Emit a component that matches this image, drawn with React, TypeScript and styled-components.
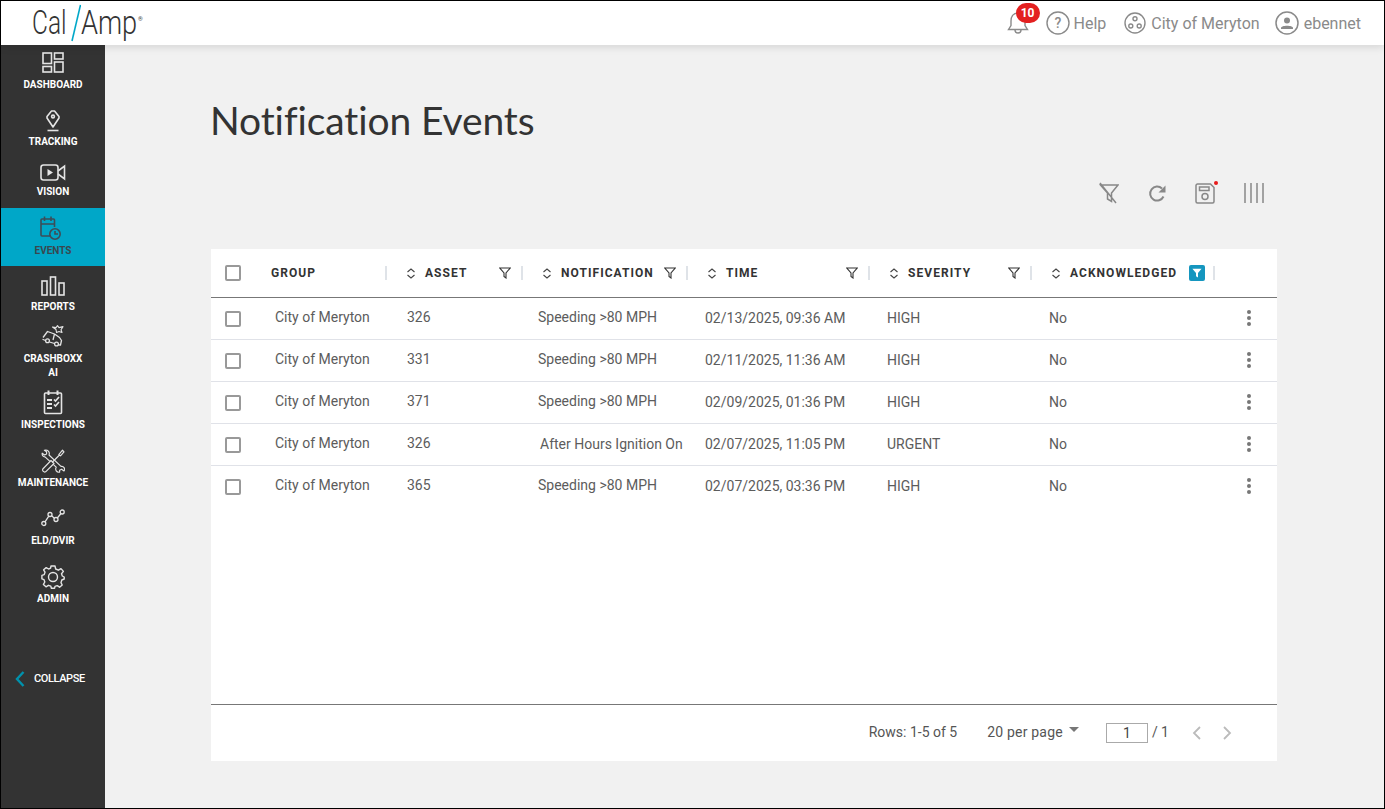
import React from "react";
import styled, { createGlobalStyle } from "styled-components";

const Global = createGlobalStyle`
  html, body { margin: 0; padding: 0; background: #f1f1f1; }
  * { box-sizing: border-box; }
`;

const COLS = "46px 130px 136px 165px 182px 162px 183px 62px";

const Frame = styled.div`
  width: 1385px; height: 809px; border: 1px solid #000; display: flex; flex-direction: column;
  overflow: hidden; background: #f1f1f1; font-family: Roboto, "Liberation Sans", sans-serif;
`;
const Header = styled.header`
  height: 44px; flex: none; background: #fff; display: flex; align-items: center; justify-content: space-between;
  box-shadow: 0 2px 8px rgba(0,0,0,.12); position: relative; z-index: 2; padding: 0 23px 0 31px;
`;
const Logo = styled.div`
  display: flex; align-items: center; height: 44px; color: #333;
`;
const LogoWord = styled.span<{ $w: number; $sx: number }>`
  display: inline-block; width: ${p => p.$w}px; font: 300 34px/42px Roboto, sans-serif; margin-top: -2px; transform: scaleX(${p => p.$sx}); transform-origin: left center; white-space: nowrap;
`;
const LogoReg = styled.span`
  font: 400 6px/8px Roboto, sans-serif; color: #444; margin: -9px 0 0 1px;
`;
const HeaderRight = styled.div`display: flex; align-items: center;`;
const HeaderLink = styled.div<{ $ml: number; $gap: number }>`
  display: flex; align-items: center; gap: ${p => p.$gap}px; margin-left: ${p => p.$ml}px; color: #8a8a8a; font-size: 16px; white-space: nowrap;
`;
const BellWrap = styled.div`position: relative; width: 24px; height: 24px; display: flex; `;
const Badge = styled.span`
  position: absolute; left: 9px; top: -8px; width: 24px; height: 20px; border-radius: 10px; background: #e32020; color: #fff;
  font: 700 12px/20px Roboto, sans-serif; text-align: center;
`;

const Body = styled.div`flex: 1; display: flex; min-height: 0;`;
const Sidebar = styled.nav`
  width: 104px; flex: none; background: #333; display: flex; flex-direction: column;
`;
const NavItem = styled.div<{ $h: number; $pt: number; $gap: number; $active?: boolean }>`
  height: ${p => p.$h}px; padding-top: ${p => p.$pt}px; display: flex; flex-direction: column; align-items: center; flex: none;
  gap: ${p => p.$gap}px; background: ${p => (p.$active ? "#00a7c8" : "transparent")};
  color: ${p => (p.$active ? "#39474f" : "#fff")};
  svg { color: ${p => (p.$active ? "#3d4d58" : "#e4e4e4")}; flex: none; }
`;
const NavLabel = styled.span`
  font: 700 10px/14px Roboto, sans-serif; text-align: center; color: inherit;
`;
const Collapse = styled.div`
  margin-top: 55px; display: flex; align-items: center; height: 20px; padding-left: 14px; gap: 9px; color: #fff;
  font: 500 11px/20px Roboto, sans-serif; letter-spacing: -.4px;
`;

const Main = styled.main`
  flex: 1; padding: 0 107px 0 106px; display: flex; flex-direction: column; min-width: 0;
`;
const Title = styled.h1`
  margin: 50px 0 0 -1px; height: 50px; font: 400 39px/50px Lato, sans-serif; color: #333; letter-spacing: -.1px;
`;
const Toolbar = styled.div`
  display: flex; justify-content: flex-end; align-items: center; height: 24px; margin-top: 36px; padding-right: 12px; gap: 26.5px; color: #888;
`;
const ToolIcon = styled.div`width: 22px; height: 24px; display: flex; align-items: center; justify-content: center;`;
const Card = styled.section`
  margin-top: 44px; height: 512px; background: #fff; display: flex; flex-direction: column;
`;
const HeadRow = styled.div`
  height: 49px; display: grid; grid-template-columns: ${COLS}; border-bottom: 1px solid #777; align-items: center; flex: none;
`;
const HeadCell = styled.div<{ $pl: number }>`
  display: flex; align-items: center; padding-left: ${p => p.$pl}px; height: 24px;
`;
const HeadText = styled.span<{ $ml?: number }>`
  font: 700 12px/16px Roboto, sans-serif; letter-spacing: 1.05px; color: #333; margin-left: ${p => p.$ml ?? 0}px; white-space: nowrap;
`;
const Spacer = styled.span`flex: 1;`;
const Separator = styled.span<{ $ml?: number }>`width: 2px; height: 14px; background: #dfe3e8; margin-left: ${p => p.$ml ?? 10}px; flex: none;`;
const FilterChip = styled.span`
  width: 16px; height: 16px; border-radius: 2px; background: #1596bf; display: flex; align-items: center; justify-content: center;
`;
const Rows = styled.div`flex: 1;`;
const Row = styled.div<{ $last?: boolean }>`
  height: 42px; display: grid; grid-template-columns: ${COLS}; align-items: center;
  border-bottom: ${p => (p.$last ? "none" : "1px solid #e0e2e8")};
`;
const CheckCell = styled.div`padding-left: 14px; display: flex; align-items: center;`;
const Checkbox = styled.span`
  width: 16px; height: 16px; border: 2px solid #999; border-radius: 2px; display: block; background: #fff;
`;
const Cell = styled.div<{ $pl: number; $up: number }>`
  padding-left: ${p => p.$pl}px; margin-top: ${p => -2 * p.$up}px; font-size: 14px; color: #5c5c5c; white-space: nowrap;
`;
const Kebab = styled.div`display: flex; justify-content: flex-end; padding: 0 26px 2px 0; `;
const Footer = styled.div`
  height: 57px; border-top: 1px solid #777; display: flex; align-items: center; padding: 0 44px 3px 0; justify-content: flex-end;
  font-size: 14px; color: #555; flex: none;
`;
const RowsText = styled.span`margin-right: 30px;`;
const PerPage = styled.span`display: flex; align-items: center; gap: 6px; margin-right: 27px; letter-spacing: .2px;`;
const Caret = styled.span`
  width: 0; height: 0; border-left: 5.5px solid transparent; border-right: 5.5px solid transparent; border-top: 5px solid #777; margin-top: -4px;
`;
const PageInput = styled.span`
  width: 42px; height: 20px; border: 1px solid #aaa; font-size: 14px; line-height: 18px; text-align: center; display: block; margin: 2px 4px 0 0; color: #444;
`;
const PagerArrows = styled.span`display: flex; gap: 18px; margin: 2px 0 0 22px;`;

const s = { fill: "none", stroke: "currentColor", strokeWidth: 1.6 } as const;

const Dashboard = () => (
  <svg width="22" height="21" viewBox="0 0 22 21" {...s}><rect x="1" y="1" width="8.5" height="10.5" /><rect x="12.5" y="1" width="8.5" height="6" /><rect x="1" y="14.5" width="8.5" height="5.5" /><rect x="12.5" y="10" width="8.5" height="10" /></svg>
);
const Tracking = () => (
  <svg width="14" height="22" viewBox="0 0 14 22" {...s} strokeLinejoin="round"><path d="M7 17 L1 8 L1 6.5 L5.5 1 H8.5 L13 6.5 L13 8 Z" /><circle cx="7" cy="6.5" r="1.4" /><path d="M1.5 20.5 H12.5" /></svg>
);
const Vision = () => (
  <svg width="26" height="17" viewBox="0 0 26 17" {...s}><rect x="1" y="1" width="17" height="15" rx="2.5" /><path d="M7.5 5 L13 8.5 L7.5 12 Z" fill="currentColor" stroke="none" /><path d="M18 7 L24.5 2 V15 L18 10" /></svg>
);
const Events = () => (
  <svg width="26" height="25" viewBox="0 0 26 25" {...s}><path d="M11 20 H2 a1 1 0 0 1 -1 -1 V4 a1 1 0 0 1 1 -1 H13.5 a1 1 0 0 1 1 1 V11" /><path d="M1 8 H14.5 M4.5 0.5 V5 M11 0.5 V5" /><circle cx="15" cy="18" r="5.2" /><path d="M15 15 V18 H18" /></svg>
);
const Reports = () => (
  <svg width="24" height="20" viewBox="0 0 24 20" {...s}><rect x="1" y="5" width="5" height="14" /><rect x="9.5" y="1" width="5" height="18" /><rect x="18" y="7" width="5" height="12" /></svg>
);
const Crash = () => (
  <svg width="22" height="22" viewBox="0 0 22 22" {...s} strokeWidth="1.3" strokeLinejoin="round"><path d="M1 12.5 L5.5 6.5 L12.5 9 L17.5 12.5 L19.5 15.5 L18.5 20 L16 19.8 M12.5 18.5 L7.5 17 M3.5 15.5 L1 14.5 Z" /><path d="M12.5 9 L11 15" /><circle cx="5.5" cy="15.8" r="1.9" /><circle cx="14.5" cy="19" r="1.9" /><path d="M10.5 2 L14 2.6 L15.5 0.6 L17 2.6 L21 1.6 L19 4.8 L20 7.5 L17 6.5 L14.5 7.5 L14 4.5 Z" strokeWidth="1.1" /></svg>
);
const Inspections = () => (
  <svg width="20" height="25" viewBox="0 0 20 25" {...s}><rect x="1.5" y="3" width="17" height="20.5" rx="1" /><path d="M5.5 0.5 V5 M14.5 0.5 V5" strokeWidth="2" /><path d="M4 10 H9 M4 14 H9 M4 18 H9" strokeWidth="2.2" /><path d="M11 9.5 L12.5 11 L16 7 M11 14.5 L12.5 16 L16 12" /></svg>
);
const Maintenance = () => (
  <svg width="24" height="24" viewBox="0 0 24 24" {...s} strokeWidth="1.15" strokeLinejoin="round"><path d="M1.2 4.2 L3.6 6 L5.6 5 L5.6 2.8 L3.4 1.2 C6.6 0.2 9.2 3 8 6 L20 17.4 C22.8 16.8 24.4 19.6 23 22 L20.6 20.2 L18.6 21.2 L18.6 23.2 C15.6 23.8 13.8 20.8 15.2 18.2 L4 7.8 C2.4 8 0.8 6.4 1.2 4.2 Z" fill="#333" /><path d="M21.5 1.2 L23 2.8 L19.5 6.8 L17.8 5.6 Z M18.5 6 L11 13.5 M10 11.5 L13 14.5 L4.6 22.8 C3 23.6 1 22 1.8 20 Z" fill="#333" /></svg>
);
const Eld = () => (
  <svg width="24" height="18" viewBox="0 0 24 18" {...s} strokeWidth="1.3"><circle cx="2.8" cy="14.5" r="2" /><circle cx="9" cy="5.5" r="2" /><circle cx="15" cy="10.5" r="2" /><circle cx="21.2" cy="3" r="2" /><path d="M4 12.8 L7.8 7.2 M10.6 6.8 L13.4 9.2 M16.3 9 L20 4.5" /></svg>
);
const Admin = () => (
  <svg width="24" height="24" viewBox="0 0 24 24" {...s} strokeWidth="1.4"><circle cx="12" cy="12" r="4.5" /><path d="M10 1 H14 L14.7 4 L17.4 5.2 L20 3.6 L22.4 6.4 L20.5 8.8 L21.3 11 L23.2 12 L23.2 14 L20.8 15 L20 17.6 L21.2 20 L18.6 22.2 L16.2 20.6 L14 21.3 L13.6 23.2 L10.4 23.2 L9.8 21.2 L7.4 20.3 L5 21.8 L2.4 19.4 L3.8 17 L3 14.6 L0.9 13.8 L0.9 10.4 L3.2 9.6 L4 7.2 L2.6 4.8 L5.2 2.6 L7.6 4 L9.6 3.2 Z" strokeLinejoin="round" /></svg>
);
const Bell = () => (
  <svg width="22" height="24" viewBox="0 0 22 24" fill="none" stroke="#8a8a8a" strokeWidth="1.4"><path d="M11 2 C6 2 4 6 4 10 V14.5 L1.5 18.5 H20.5 L18 14.5 V10 C18 6 16 2 11 2 Z" /><path d="M8 19 a3 3 0 0 0 6 0" /></svg>
);
const Help = () => (
  <svg width="24" height="24" viewBox="0 0 24 24" fill="none" stroke="#8a8a8a" strokeWidth="1.4"><circle cx="12" cy="12" r="11" /><text x="12" y="17" textAnchor="middle" fontFamily="Roboto" fontSize="14" fontWeight="500" fill="#8a8a8a" stroke="none">?</text></svg>
);
const Org = () => (
  <svg width="22" height="22" viewBox="0 0 22 22" fill="none" stroke="#8a8a8a" strokeWidth="1.4"><circle cx="11" cy="11" r="10" /><circle cx="11" cy="6.8" r="2" /><circle cx="6.8" cy="14" r="2" /><circle cx="15.2" cy="14" r="2" /></svg>
);
const User = () => (
  <svg width="24" height="24" viewBox="0 0 24 24" fill="none" stroke="#8a8a8a" strokeWidth="1.5"><circle cx="12" cy="12" r="11" /><circle cx="12" cy="9.5" r="3" fill="#8a8a8a" stroke="none" /><path d="M6 17 C6 14 18 14 18 17 V18 H6 Z" fill="#8a8a8a" stroke="none" /></svg>
);
const SortIcon = () => (
  <svg width="10" height="11" viewBox="0 0 10 11" fill="none" stroke="#444" strokeWidth="1.1"><path d="M1.5 4 L5 1 L8.5 4 M1.5 7 L5 10 L8.5 7" /></svg>
);
const FilterIcon = () => (
  <svg width="12" height="12" viewBox="0 0 12 12" fill="none" stroke="#333" strokeWidth="1.1"><path d="M0.8 1 H11.2 L7 6 V11 L5 9.5 V6 Z" /></svg>
);
const FilterSolid = () => (
  <svg width="10" height="10" viewBox="0 0 12 12" fill="#fff"><path d="M0.5 1 H11.5 L7.2 6 V11.5 L4.8 10 V6 Z" /></svg>
);
const More = () => (
  <svg width="4" height="16" viewBox="0 0 4 16" fill="#777"><circle cx="2" cy="2" r="2" /><circle cx="2" cy="8" r="2" /><circle cx="2" cy="14" r="2" /></svg>
);

const nav = [
  { l: ["DASHBOARD"], i: <Dashboard />, h: 55, pt: 7, g: 5 },
  { l: ["TRACKING"], i: <Tracking />, h: 58, pt: 10, g: 3 },
  { l: ["VISION"], i: <Vision />, h: 50, pt: 6, g: 4 },
  { l: ["EVENTS"], i: <Events />, h: 58, pt: 8, g: 3, a: true },
  { l: ["REPORTS"], i: <Reports />, h: 56, pt: 10, g: 4 },
  { l: ["CRASHBOXX", "AI"], i: <Crash />, h: 60, pt: 3, g: 5 },
  { l: ["INSPECTIONS"], i: <Inspections />, h: 58, pt: 8, g: 3 },
  { l: ["MAINTENANCE"], i: <Maintenance />, h: 58, pt: 9, g: 3 },
  { l: ["ELD/DVIR"], i: <Eld />, h: 58, pt: 11, g: 7 },
  { l: ["ADMIN"], i: <Admin />, h: 58, pt: 9, g: 3 },
];

const heads = [
  { t: "ASSET", w: 19 },
  { t: "NOTIFICATION", w: 19 },
  { t: "TIME", w: 19 },
  { t: "SEVERITY", w: 19 },
  { t: "ACKNOWLEDGED", w: 19, on: true },
];

const data = [
  ["326", "Speeding >80 MPH", "02/13/2025, 09:36 AM", "HIGH", 15, 1],
  ["331", "Speeding >80 MPH", "02/11/2025, 11:36 AM", "HIGH", 15, 1],
  ["371", "Speeding >80 MPH", "02/09/2025, 01:36 PM", "HIGH", 15, 1],
  ["326", "After Hours Ignition On", "02/07/2025, 11:05 PM", "URGENT", 17, 0.5],
  ["365", "Speeding >80 MPH", "02/07/2025, 03:36 PM", "HIGH", 15, 1],
] as const;

export default function App() {
  return (
    <Frame>
      <Global />
      <Header>
        <Logo>
          <LogoWord $w={38} $sx={0.72}>Cal</LogoWord>
          <svg width="11" height="38" viewBox="0 0 11 38" style={{ flex: "none" }}><path d="M10.5 1 L2 37" stroke="#00a7c8" strokeWidth="1.6" /></svg>
          <LogoWord $w={56} $sx={0.8}>Amp</LogoWord>
          <LogoReg>®</LogoReg>
        </Logo>
        <HeaderRight>
          <BellWrap><Bell /><Badge>10</Badge></BellWrap>
          <HeaderLink $ml={15} $gap={4}><Help />Help</HeaderLink>
          <HeaderLink $ml={18} $gap={5}><Org />City of Meryton</HeaderLink>
          <HeaderLink $ml={15} $gap={5}><User />ebennet</HeaderLink>
        </HeaderRight>
      </Header>
      <Body>
        <Sidebar>
          {nav.map(n => (
            <NavItem key={n.l[0]} $h={n.h} $pt={n.pt} $gap={n.g} $active={n.a}>
              {n.i}
              <NavLabel>{n.l.map((x, i) => <React.Fragment key={x}>{i > 0 && <br />}{x}</React.Fragment>)}</NavLabel>
            </NavItem>
          ))}
          <Collapse>
            <svg width="10" height="16" viewBox="0 0 10 16" fill="none" stroke="#0092ad" strokeWidth="2.4"><path d="M8.5 1 L2 8 L8.5 15" /></svg>
            COLLAPSE
          </Collapse>
        </Sidebar>
        <Main>
          <Title>Notification Events</Title>
          <Toolbar>
            <ToolIcon>
              <svg width="20" height="22" viewBox="0 0 20 22" fill="none" stroke="#888" strokeWidth="1.5"><path d="M1.5 3 H19 L12.5 11 V19.5 L8.5 17 V11 Z M1 1 L17 21" /></svg>
            </ToolIcon>
            <ToolIcon>
              <svg width="19" height="19" viewBox="0 0 19 19" fill="none" stroke="#888" strokeWidth="2"><path d="M15.5 12.5 A7 7 0 1 1 14 4.5" /><path d="M17.5 1.5 V8.5 H10.5 Z" fill="#888" stroke="none" /></svg>
            </ToolIcon>
            <ToolIcon>
              <svg width="22" height="24" viewBox="0 0 22 24" fill="none" stroke="#888" strokeWidth="1.5" style={{ overflow: "visible" }}><path d="M1 4.5 a1.5 1.5 0 0 1 1.5 -1.5 H15.5 L19 6.5 V20.5 a1.5 1.5 0 0 1 -1.5 1.5 H2.5 a1.5 1.5 0 0 1 -1.5 -1.5 Z" /><rect x="4.5" y="6" width="9.5" height="3.5" /><circle cx="10" cy="15.5" r="3" /><circle cx="21" cy="2" r="2" fill="#e81c1c" stroke="none" /></svg>
            </ToolIcon>
            <ToolIcon>
              <svg width="20" height="20" viewBox="0 0 20 20" fill="none" stroke="#888" strokeWidth="1.5"><path d="M1 0 V20 M7 0 V20 M13 0 V20 M19 0 V20" /></svg>
            </ToolIcon>
          </Toolbar>
          <Card>
            <HeadRow>
              <CheckCell><Checkbox /></CheckCell>
              <HeadCell $pl={14}><HeadText>GROUP</HeadText><Spacer /><Separator /></HeadCell>
              {heads.map(h => (
                <HeadCell key={h.t} $pl={h.w}>
                  <SortIcon />
                  <HeadText $ml={9}>{h.t}</HeadText>
                  <Spacer />
                  {h.on ? <FilterChip><FilterSolid /></FilterChip> : <FilterIcon />}
                  <Separator $ml={h.on ? 8 : 10} />
                </HeadCell>
              ))}
              <div />
            </HeadRow>
            <Rows>
              {data.map((r, i) => (
                <Row key={i} $last={i === data.length - 1}>
                  <CheckCell><Checkbox /></CheckCell>
                  <Cell $pl={18} $up={2}>City of Meryton</Cell>
                  <Cell $pl={20} $up={2}>{r[0]}</Cell>
                  <Cell $pl={r[4]} $up={r[5] * 2}>{r[1]}</Cell>
                  <Cell $pl={17} $up={1}>{r[2]}</Cell>
                  <Cell $pl={17} $up={1}>{r[3]}</Cell>
                  <Cell $pl={17} $up={1}>No</Cell>
                  <Kebab><More /></Kebab>
                </Row>
              ))}
            </Rows>
            <Footer>
              <RowsText>Rows: 1-5 of 5</RowsText>
              <PerPage>20 per page<Caret /></PerPage>
              <PageInput>1</PageInput>
              <span>/ 1</span>
              <PagerArrows>
                <svg width="12" height="14" viewBox="0 0 12 14" fill="none" stroke="#bbb" strokeWidth="1.8"><path d="M9 1 L3 7 L9 13" /></svg>
                <svg width="12" height="14" viewBox="0 0 12 14" fill="none" stroke="#bbb" strokeWidth="1.8"><path d="M3 1 L9 7 L3 13" /></svg>
              </PagerArrows>
            </Footer>
          </Card>
        </Main>
      </Body>
    </Frame>
  );
}
